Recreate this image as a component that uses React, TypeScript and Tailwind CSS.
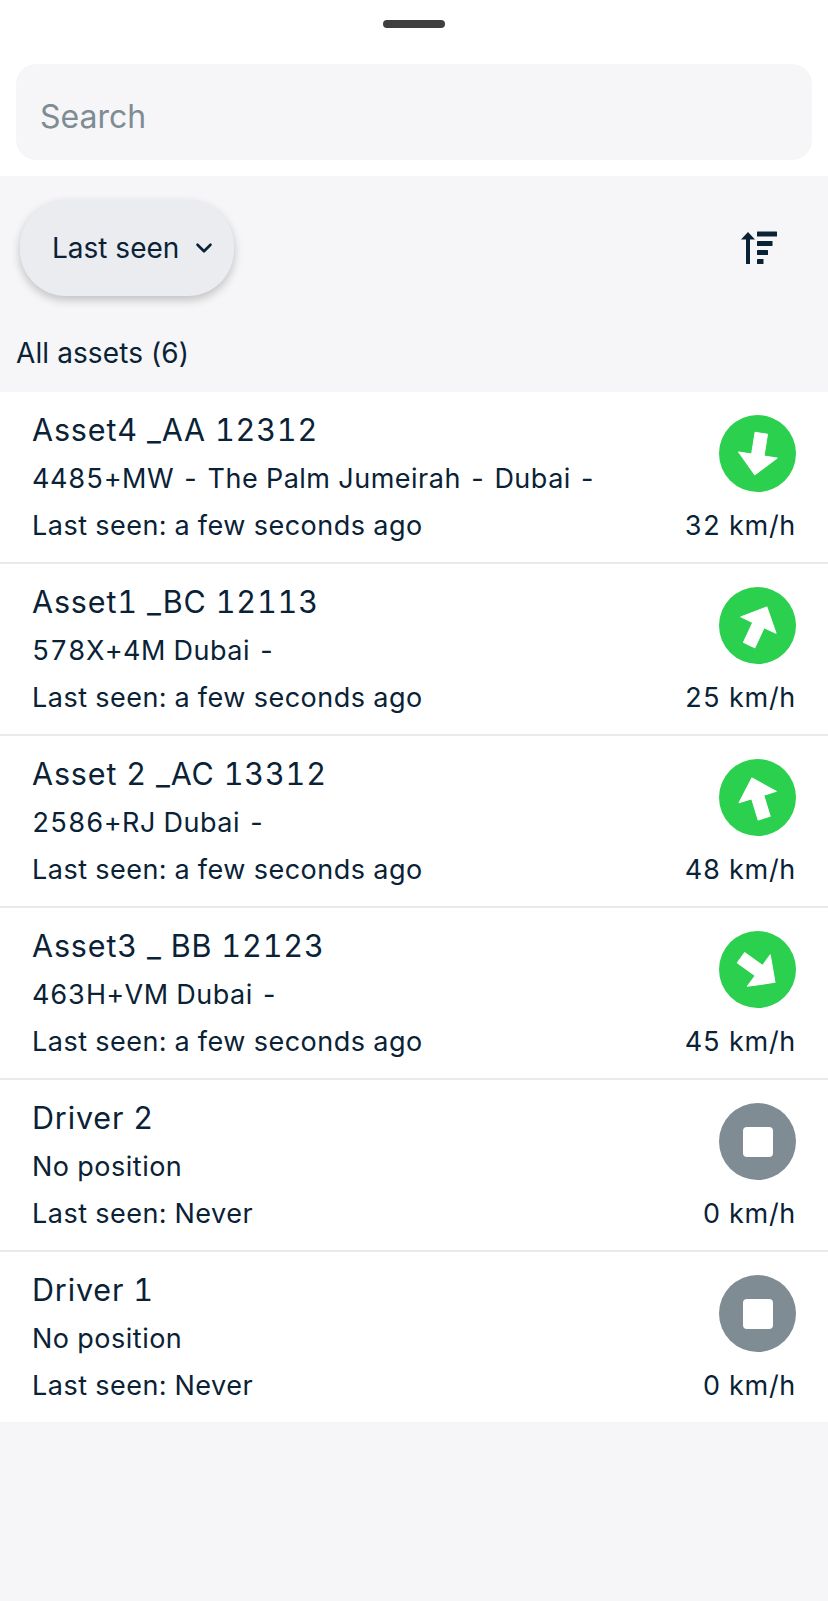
import { ChevronDown } from "lucide-react";

const assets = [
  { name: "Asset4 _AA 12312", address: "4485+MW - The Palm Jumeirah - Dubai -", seen: "a few seconds ago", speed: 32, heading: "rotate-[189deg]" },
  { name: "Asset1 _BC 12113", address: "578X+4M Dubai -", seen: "a few seconds ago", speed: 25, heading: "rotate-[25deg]" },
  { name: "Asset 2 _AC 13312", address: "2586+RJ Dubai -", seen: "a few seconds ago", speed: 48, heading: "rotate-[-17deg]" },
  { name: "Asset3 _ BB 12123", address: "463H+VM Dubai -", seen: "a few seconds ago", speed: 45, heading: "rotate-[126deg]" },
  { name: "Driver 2", address: "No position", seen: "Never", speed: 0, heading: "" },
  { name: "Driver 1", address: "No position", seen: "Never", speed: 0, heading: "" },
];

const SortIcon = () => (
  <svg width="37" height="34" viewBox="0 0 37 34" fill="#0a2236">
    <path d="M7 1 L14 8.5 H9 V33 H5 V8.5 H0 Z" />
    <rect x="16" y="0.5" width="20" height="5" rx="0.5" />
    <rect x="16" y="10" width="15.5" height="5" rx="0.5" />
    <rect x="16" y="19" width="11" height="5" rx="0.5" />
    <rect x="16" y="28" width="6.5" height="5" rx="0.5" />
  </svg>
);

const Status = ({ moving, heading }: { moving: boolean; heading: string }) =>
  moving ? (
    <div className="w-[77px] h-[77px] rounded-full bg-[#2ad04e] flex items-center justify-center">
      <svg width="50" height="50" viewBox="-25 -25 50 50" className={heading}>
        <path d="M0 -21 L19.5 -1 H6.3 V21 H-6.3 V-1 H-19.5 Z" fill="#fff" stroke="#fff" strokeLinejoin="round" strokeWidth="1" />
      </svg>
    </div>
  ) : (
    <div className="w-[77px] h-[77px] rounded-full bg-[#7f8c94] flex items-center justify-center">
      <div className="w-[30px] h-[30px] rounded-[4px] bg-white" />
    </div>
  );

const AssetRow = ({ asset }: { asset: (typeof assets)[number] }) => (
  <div className="h-[172px] last:h-[170px] bg-white border-b-2 border-[#e9e9ee] last:border-b-0 px-8 flex justify-between tabular-nums">
    <div className="pt-[20px]">
      <div className="text-[30.5px] leading-[36px] tracking-[0.85px] h-[49px]">{asset.name}</div>
      <div className="text-[27px] leading-[36px] tracking-[0.5px] h-[47px] whitespace-pre">{asset.address}</div>
      <div className="text-[27px] leading-[36px] tracking-[0.5px]">Last seen: {asset.seen}</div>
    </div>
    <div className="flex flex-col items-end pt-[23px]">
      <Status moving={asset.speed > 0} heading={asset.heading} />
      <div className="text-[27px] leading-[36px] tracking-[0.7px] mt-[16px]">{asset.speed} km/h</div>
    </div>
  </div>
);

export default function App() {
  return (
    <div className="min-h-[1601px] bg-[#f6f6f8] text-[#0a2236] font-['Inter',sans-serif] flex flex-col">
      <div className="bg-white h-[176px] px-4 pt-5">
        <div className="w-[62px] h-2 mx-auto rounded-full bg-[#3f3f3f]" />
        <div className="mt-9 h-24 rounded-[20px] bg-[#f6f6f8] flex items-center px-6 pt-[10px] text-[32px] text-[#7f8c94]">
          Search
        </div>
      </div>
      <div className="h-[120px] flex items-start justify-between pl-5 pr-[50px] pt-6">
        <div className="w-[214px] h-24 rounded-[46px] bg-[#ebecf0] shadow-[0_4px_10px_rgba(0,0,0,0.22)] flex items-center pl-8 gap-[12px] text-[28px]">
          Last seen
          <ChevronDown size={26} strokeWidth={2.4} />
        </div>
        <div className="h-24 flex items-center">
          <SortIcon />
        </div>
      </div>
      <div className="h-[96px] px-4 pt-[39px] text-[28px] leading-[36px] tracking-[0.1px]">All assets (6)</div>
      <div>
        {assets.map((a) => (
          <AssetRow key={a.name} asset={a} />
        ))}
      </div>
    </div>
  );
}
